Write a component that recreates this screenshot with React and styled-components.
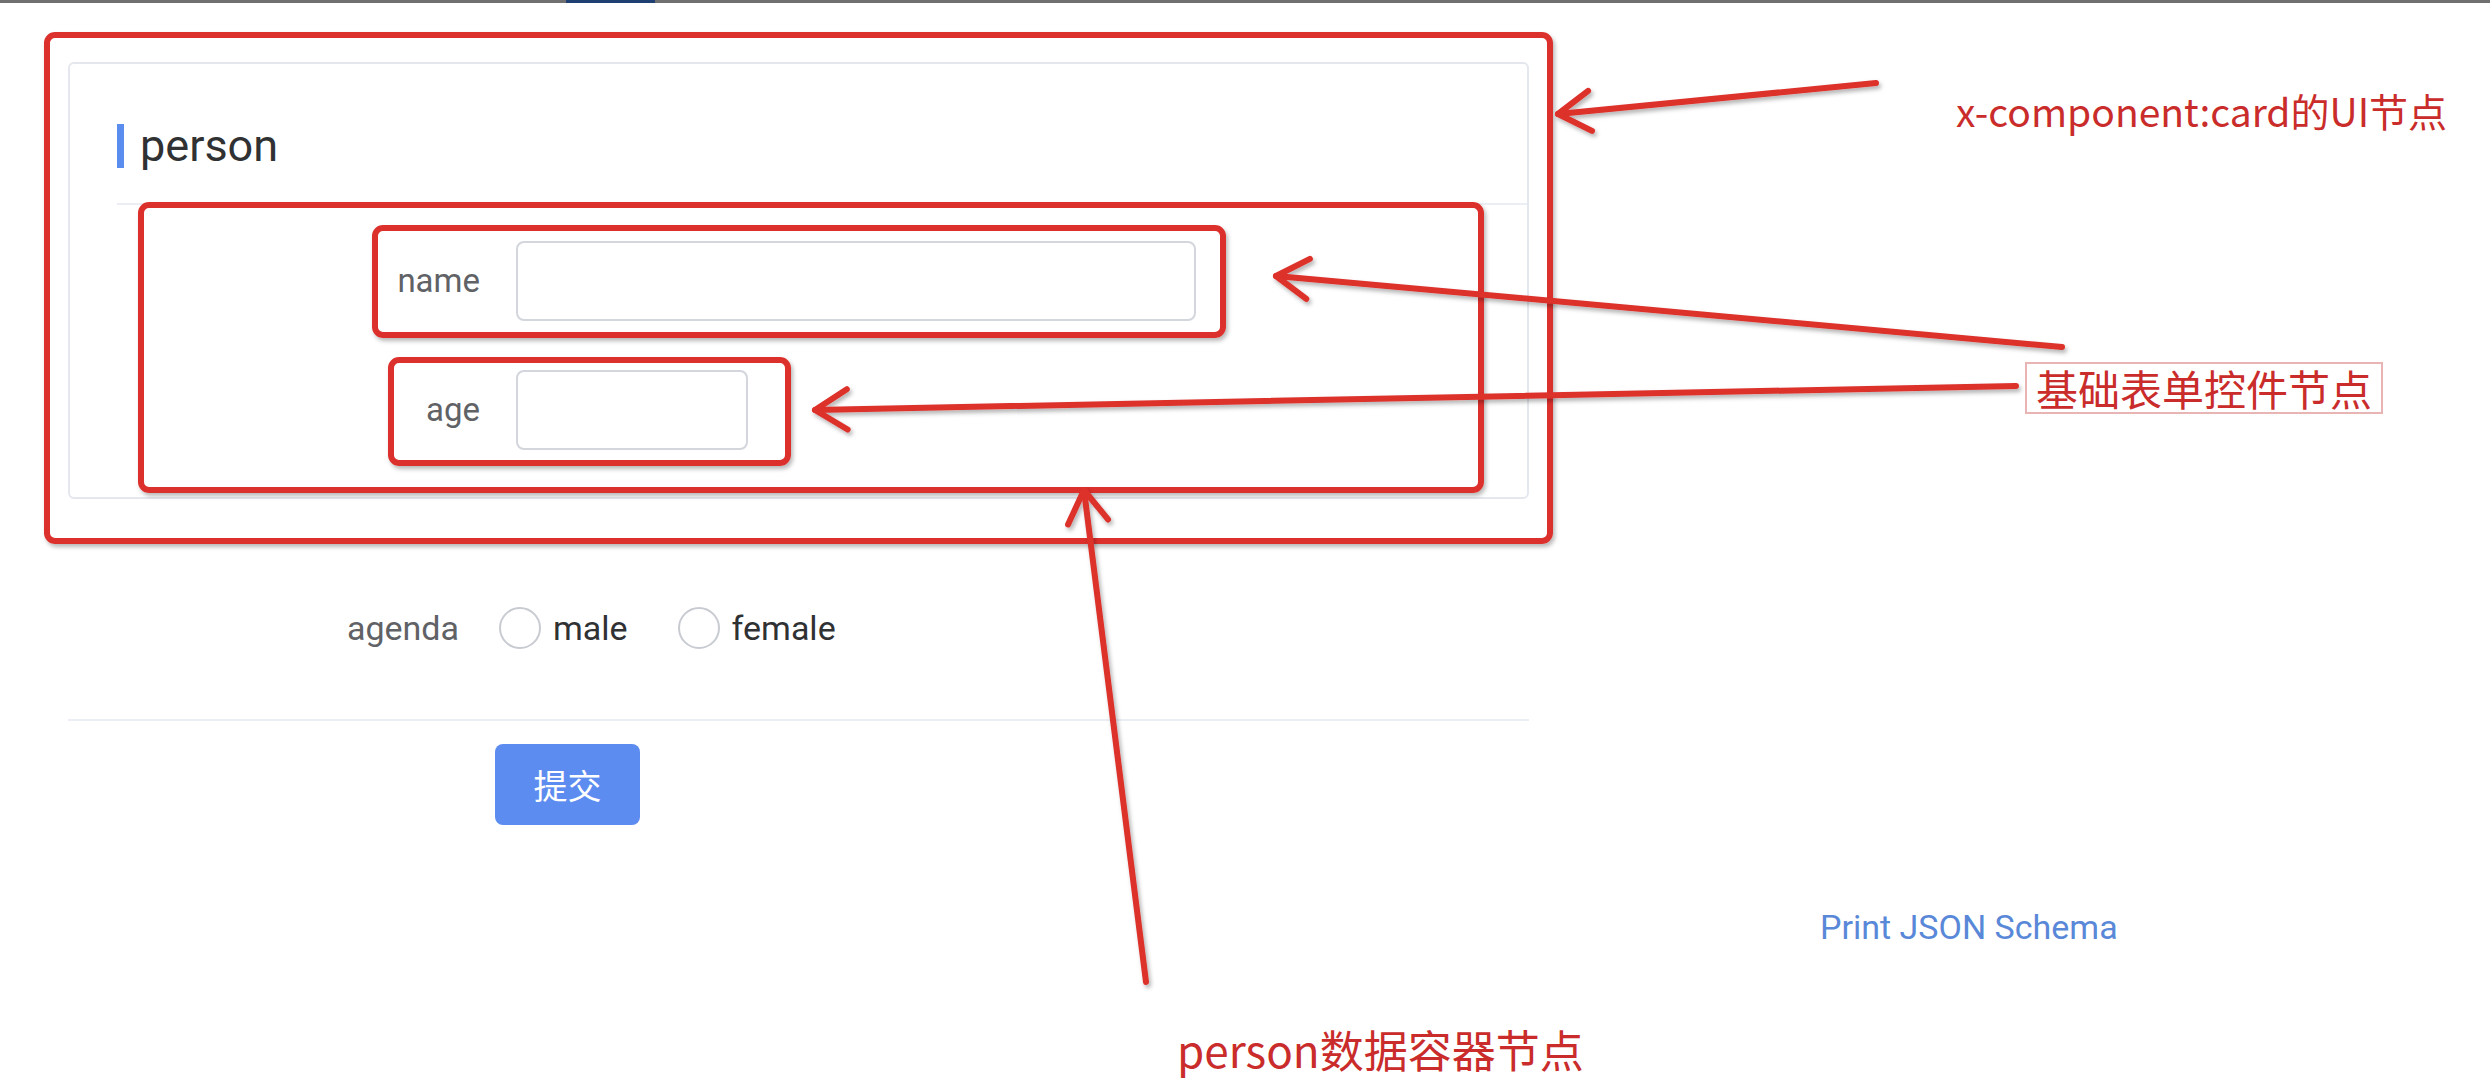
import React from "react";
import styled, { createGlobalStyle } from "styled-components";

const RED = "#dc302c";
const NOTE_RED = "#c92c2a";

const GlobalStyle = createGlobalStyle`
  body {
    margin: 0;
    background: #ffffff;
    font-family: Roboto, "Noto Sans CJK SC", sans-serif;
  }
  * { box-sizing: border-box; }
`;

// arrows drawn over the screenshot: [tail, head]
const arrows = [
  [[1876, 83], [1558, 114]],
  [[2062, 347], [1276, 276]],
  [[2016, 386], [815, 410]],
  [[1146, 982], [1084, 490]],
];

function wings(tail, head, len = 38, deg = 32) {
  const a = Math.atan2(tail[1] - head[1], tail[0] - head[0]);
  const r = (deg * Math.PI) / 180;
  return [a + r, a - r].map((t) => [head[0] + len * Math.cos(t), head[1] + len * Math.sin(t)]);
}

export default function App() {
  return (
    <Page>
      <GlobalStyle />
      <TopBar>
        <TabMark />
      </TopBar>
      <Layout>
        <Main>
          <CardNote>
            <Card>
              <CardHeader>
                <TitleBar />
                <Title>person</Title>
              </CardHeader>
              <FieldsNote>
                <ItemNote $left={228} $pad="10px 24px 11px 0">
                  <FieldLabel $w={138}>name</FieldLabel>
                  <TextInput $w={680} />
                </ItemNote>
                <ItemNote $left={244} $pad="7px 37px 10px 0">
                  <FieldLabel $w={122}>age</FieldLabel>
                  <TextInput $w={232} />
                </ItemNote>
              </FieldsNote>
            </Card>
          </CardNote>

          <FormRow>
            <RowLabel>agenda</RowLabel>
            <RadioGroup>
              <RadioOption>
                <RadioCircle />
                male
              </RadioOption>
              <RadioOption>
                <RadioCircle />
                female
              </RadioOption>
            </RadioGroup>
          </FormRow>
          <Divider />
          <SubmitRow>
            <SubmitButton>提交</SubmitButton>
          </SubmitRow>
        </Main>
        <Aside>
          <LinkText>Print JSON Schema</LinkText>
        </Aside>
      </Layout>

      <Overlay width="2490" height="1090">
        <defs>
          <filter id="sh" x="-5%" y="-5%" width="110%" height="110%">
            <feDropShadow dx="2" dy="3" stdDeviation="2" floodColor="#000" floodOpacity="0.3" />
          </filter>
        </defs>
        <g stroke={RED} strokeWidth="6" strokeLinecap="round" fill="none" filter="url(#sh)">
          {arrows.map(([t, h], i) => {
            const [w1, w2] = wings(t, h);
            return (
              <g key={i}>
                <line x1={t[0]} y1={t[1]} x2={h[0]} y2={h[1]} />
                <polyline points={`${w1[0]},${w1[1]} ${h[0]},${h[1]} ${w2[0]},${w2[1]}`} strokeLinejoin="round" />
              </g>
            );
          })}
        </g>
      </Overlay>

      <NoteText $x={1956} $y={91} $size={39}>x-component:card的UI节点</NoteText>
      <NoteBox $x={2025} $y={362}>基础表单控件节点</NoteBox>
      <NoteText $x={1177} $y={1027} $size={44}>person数据容器节点</NoteText>
    </Page>
  );
}

const Page = styled.div`
  position: relative;
  width: 2490px;
  height: 1090px;
  overflow: hidden;
  background: #ffffff;
`;

const TopBar = styled.div`
  display: flex;
  height: 3px;
  background: #707070;
`;

const TabMark = styled.div`
  margin-left: 566px;
  width: 89px;
  background: #1f3f73;
`;

const Layout = styled.div`
  display: flex;
  align-items: flex-start;
`;

const Main = styled.div`
  margin-left: 68px;
  width: 1461px;
  padding-top: 29px;
  display: flex;
  flex-direction: column;
`;

const CardNote = styled.div`
  margin: 0 -24px;
  padding: 24px 18px 39px;
  border: 6px solid ${RED};
  border-radius: 11px;
  box-shadow: 2px 3px 4px rgba(0, 0, 0, 0.28);
`;

const Card = styled.div`
  border: 2px solid #e4e7ed;
  border-radius: 6px;
  padding-bottom: 4px;
  background: #ffffff;
`;

const CardHeader = styled.div`
  display: flex;
  align-items: center;
  gap: 16px;
  margin-left: 47px;
  padding: 60px 0 35px;
  border-bottom: 2px solid #ebeef5;
`;

const TitleBar = styled.div`
  width: 7px;
  height: 44px;
  background: #5b8def;
`;

const Title = styled.div`
  font-size: 45px;
  line-height: 44px;
  color: #303133;
`;

const FieldsNote = styled.div`
  display: flex;
  flex-direction: column;
  align-items: flex-start;
  gap: 19px;
  margin: -3px 43px 0 68px;
  padding: 17px 0 21px;
  border: 6px solid ${RED};
  border-radius: 11px;
  box-shadow: 2px 3px 4px rgba(0, 0, 0, 0.28);
`;

const ItemNote = styled.div`
  display: flex;
  align-items: center;
  margin-left: ${(p) => p.$left}px;
  padding: ${(p) => p.$pad};
  border: 6px solid ${RED};
  border-radius: 11px;
  box-shadow: 2px 3px 4px rgba(0, 0, 0, 0.28);
`;

const FieldLabel = styled.label`
  width: ${(p) => p.$w}px;
  padding-right: 36px;
  text-align: right;
  font-size: 33px;
  line-height: 80px;
  color: #606266;
`;

const TextInput = styled.input`
  width: ${(p) => p.$w}px;
  height: 80px;
  border: 2px solid #d3d6dc;
  border-radius: 8px;
  outline: none;
  background: #ffffff;
`;

const FormRow = styled.div`
  display: flex;
  align-items: center;
  height: 80px;
  margin-top: 44px;
`;

const RowLabel = styled.label`
  width: 427px;
  padding-right: 36px;
  text-align: right;
  font-size: 34px;
  color: #606266;
`;

const RadioGroup = styled.div`
  display: flex;
  align-items: center;
  padding-left: 4px;
`;

const RadioOption = styled.label`
  display: flex;
  align-items: center;
  gap: 12px;
  margin-right: 50px;
  font-size: 34px;
  color: #303133;
`;

const RadioCircle = styled.span`
  width: 42px;
  height: 42px;
  border: 2px solid #c8cbd1;
  border-radius: 50%;
  background: #ffffff;
`;

const Divider = styled.div`
  height: 2px;
  margin-top: 51px;
  background: #ebeef5;
`;

const SubmitRow = styled.div`
  display: flex;
  margin-top: 23px;
  padding-left: 427px;
`;

const SubmitButton = styled.button`
  width: 145px;
  height: 81px;
  border: none;
  border-radius: 8px;
  background: #5d8cf0;
  color: #ffffff;
  font-family: "Noto Sans CJK SC", sans-serif;
  font-size: 34px;
`;

const Aside = styled.div`
  margin-left: 291px;
  padding-top: 904px;
`;

const LinkText = styled.span`
  font-size: 34px;
  line-height: 40px;
  color: #5a88d8;
  white-space: nowrap;
`;

const Overlay = styled.svg`
  position: absolute;
  left: 0;
  top: 0;
  pointer-events: none;
`;

const NoteText = styled.div`
  position: absolute;
  left: ${(p) => p.$x}px;
  top: ${(p) => p.$y}px;
  font-family: "Noto Sans CJK SC", sans-serif;
  font-size: ${(p) => p.$size}px;
  line-height: 1;
  color: ${NOTE_RED};
  white-space: nowrap;
`;

const NoteBox = styled.div`
  position: absolute;
  left: ${(p) => p.$x}px;
  top: ${(p) => p.$y}px;
  height: 52px;
  padding: 0 9px;
  border: 2px solid #e8b4b4;
  font-family: "Noto Sans CJK SC", sans-serif;
  font-size: 42px;
  line-height: 48px;
  color: ${NOTE_RED};
  white-space: nowrap;
`;
